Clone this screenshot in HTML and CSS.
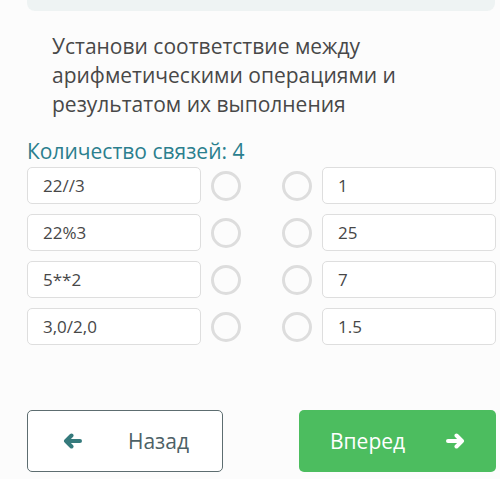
FILE: index.html
```html
<!DOCTYPE html>
<html lang="ru">
<head>
    <meta charset="UTF-8">
    <meta name="viewport" content="width=device-width, initial-scale=1.0">
    <title>Задание</title>
    <link rel="stylesheet" href="styles.css">
</head>
<body>

<div class="top-panel"></div>

<div class="task">
    <p class="question">Установи соответствие между арифметическими операциями и результатом их выполнения</p>

    <div class="links-count">Количество связей: 4</div>

    <div class="pairs">
        <div class="pair">
            <div class="item">22//3</div>
            <span class="dot"></span>
            <span class="dot dot-right"></span>
            <div class="item">1</div>
        </div>
        <div class="pair">
            <div class="item">22%3</div>
            <span class="dot"></span>
            <span class="dot dot-right"></span>
            <div class="item">25</div>
        </div>
        <div class="pair">
            <div class="item">5**2</div>
            <span class="dot"></span>
            <span class="dot dot-right"></span>
            <div class="item">7</div>
        </div>
        <div class="pair">
            <div class="item">3,0/2,0</div>
            <span class="dot"></span>
            <span class="dot dot-right"></span>
            <div class="item">1.5</div>
        </div>
    </div>

    <div class="nav">
        <a href="#" class="btn btn-back">
            <svg width="21" height="16" viewBox="0 0 21 16"><path d="M18 8H4 M9.5 2.5L4 8L9.5 13.5" fill="none" stroke="currentColor" stroke-width="4" stroke-linecap="round" stroke-linejoin="round"/></svg>
            <span>Назад</span>
        </a>
        <a href="#" class="btn btn-next">
            <span>Вперед</span>
            <svg width="21" height="16" viewBox="0 0 21 16"><path d="M3 8H17 M11.5 2.5L17 8L11.5 13.5" fill="none" stroke="currentColor" stroke-width="4" stroke-linecap="round" stroke-linejoin="round"/></svg>
        </a>
    </div>
</div>

</body>
</html>
```

FILE: styles.css
```css
body {
    font-family: "Open Sans", Arial, sans-serif;
    margin: 0;
    padding: 0;
    background-color: #fcfcfc;
    color: #444;
}
.top-panel {
    height: 11px;
    margin: 0 5px 0 27px;
    background-color: #eef3f3;
    border-radius: 0 0 8px 8px;
}
.task {
    padding: 0 4px 0 27px;
}
.question {
    margin: 21px 0 0 25px;
    font-size: 21px;
    line-height: 29px;
    color: #484848;
}
.links-count {
    margin-top: 21px;
    font-size: 21px;
    line-height: 22px;
    color: #2b7f8e;
}
.pairs {
    margin-top: 5px;
    display: flex;
    flex-direction: column;
    gap: 10px;
}
.pair {
    display: flex;
    align-items: center;
    height: 37px;
}
.item {
    flex: 1;
    height: 37px;
    box-sizing: border-box;
    border: 1px solid #dedede;
    border-radius: 5px;
    background-color: #fff;
    padding-left: 15px;
    font-size: 17px;
    line-height: 35px;
    color: #474747;
}
.dot {
    width: 30px;
    height: 30px;
    box-sizing: border-box;
    border: 3px solid #dddddd;
    border-radius: 50%;
    margin-left: 10px;
}
.dot-right {
    margin-left: 41px;
    margin-right: 10px;
}
.nav {
    display: flex;
    justify-content: space-between;
    margin-top: 65px;
}
.btn {
    display: flex;
    align-items: center;
    justify-content: space-between;
    width: 196px;
    height: 62px;
    box-sizing: border-box;
    border-radius: 5px;
    font-size: 21px;
    text-decoration: none;
}
.btn-back {
    border: 1px solid #5d6d70;
    background-color: #fff;
    color: #4d6166;
    padding: 0 33px 0 34px;
}
.btn-back svg {
    color: #357a7c;
}
.btn-next {
    width: 197px;
    background-color: #4cbd5f;
    color: #fff;
    padding: 0 30px 0 31px;
}
```
